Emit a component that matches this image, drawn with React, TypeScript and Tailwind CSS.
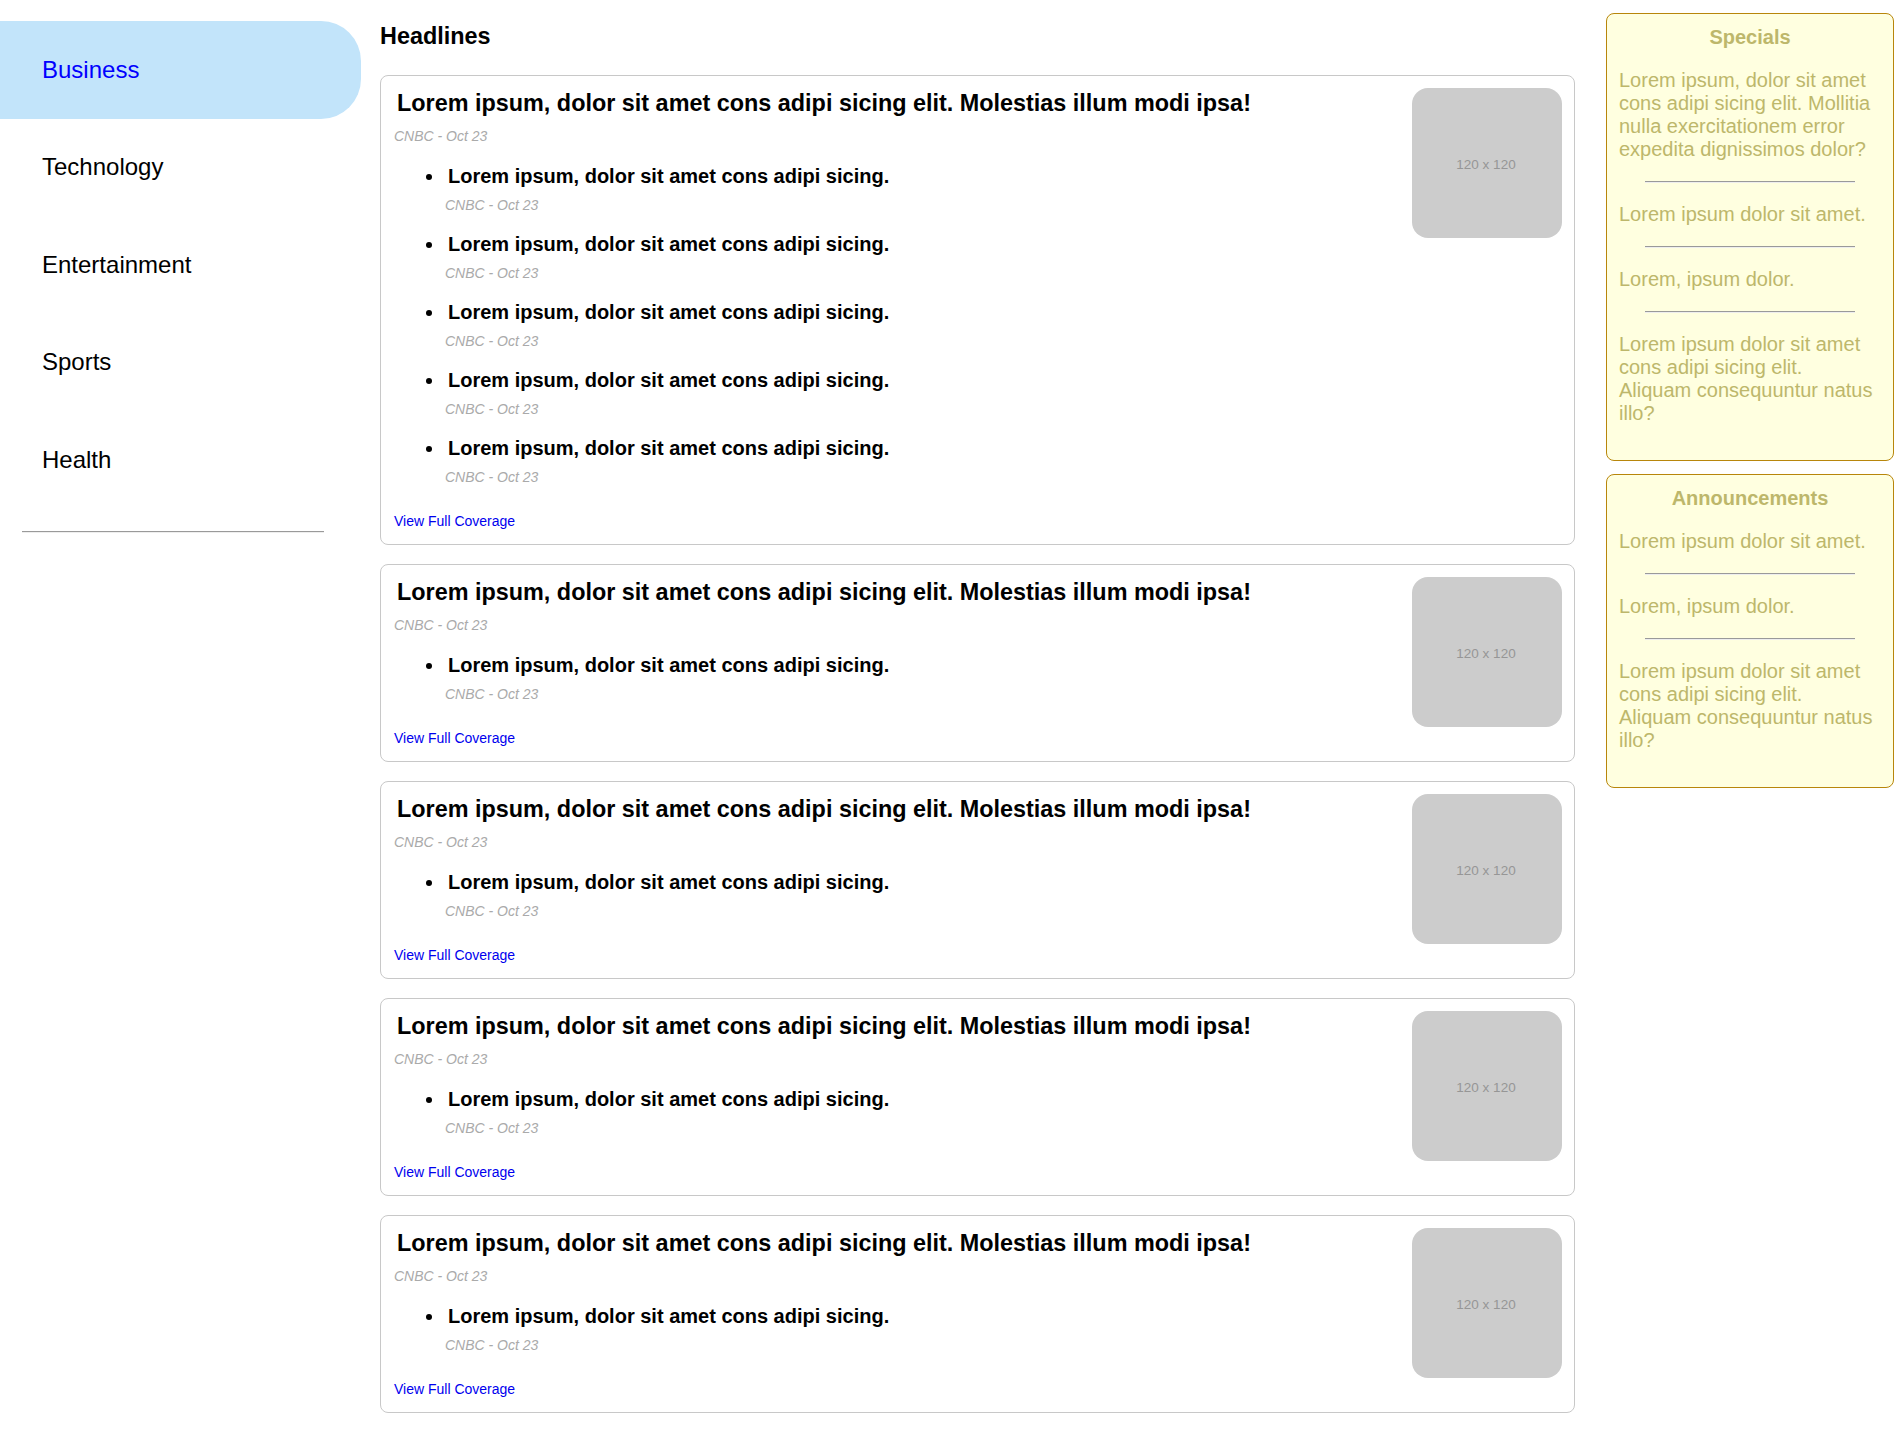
import React from "react";

const navItems = ["Business", "Technology", "Entertainment", "Sports", "Health"];

const stories = [
    { bullets: 5 },
    { bullets: 1 },
    { bullets: 1 },
    { bullets: 1 },
    { bullets: 1 },
];

const specials = [
    "Lorem ipsum, dolor sit amet cons adipi sicing elit. Mollitia nulla exercitationem error expedita dignissimos dolor?",
    "Lorem ipsum dolor sit amet.",
    "Lorem, ipsum dolor.",
    "Lorem ipsum dolor sit amet cons adipi sicing elit. Aliquam consequuntur natus illo?",
];

const announcements = [
    "Lorem ipsum dolor sit amet.",
    "Lorem, ipsum dolor.",
    "Lorem ipsum dolor sit amet cons adipi sicing elit. Aliquam consequuntur natus illo?",
];

function Sidebar() {
    return (
        <nav className="w-[361px] shrink-0 pt-[21px]">
            <ul>
                {navItems.map((item, i) => (
                    <li
                        key={item}
                        className={`h-[97.5px] flex items-center pl-[42px] text-[24px] cursor-pointer ${i === 0
                            ? "bg-[#c2e4fa] text-[#0000ff] rounded-r-[40px]"
                            : "text-black"
                            }`}
                    >
                        {item}
                    </li>
                ))}
            </ul>
            <div className="mt-[22px] ml-[22px] w-[302px] border-t border-b border-t-[#9a9a9a] border-b-[#eeeeee]" />
        </nav>
    );
}

function Meta({ className = "" }: { className?: string }) {
    return <div className={`text-[14px] leading-4 italic text-[#aaaaaa] ${className}`}>CNBC - Oct 23</div>;
}

function StoryCard({ bullets }: { bullets: number }) {
    return (
        <div className="flex border border-[#c8c8c8] rounded-lg pt-3 pr-3 pl-[13px] pb-[14.5px]">
            <div className="flex-1">
                <h3 className="mt-[2.5px] pl-[3px] text-[23.4px] leading-[27px] font-bold text-black">
                    Lorem ipsum, dolor sit amet cons adipi sicing elit. Molestias illum modi ipsa!
                </h3>
                <Meta className="mt-[10.5px]" />
                <ul className="mt-[21.5px] pl-[51px] list-disc flex flex-col gap-5">
                    {Array.from({ length: bullets }).map((_, i) => (
                        <li key={i} className="text-[20px] leading-[23px] font-bold text-black">
                            <div className="pl-[3px]">Lorem ipsum, dolor sit amet cons adipi sicing.</div>
                            <Meta className="mt-[9px] font-normal" />
                        </li>
                    ))}
                </ul>
                <a href="#" className="block mt-7 text-[14px] leading-4 text-[#0000ee]">
                    View Full Coverage
                </a>
            </div>
            <div className="w-[150px] h-[150px] shrink-0 rounded-2xl bg-[#cccccc] flex items-center justify-center pt-[5px] pr-[2px] text-[13.5px] text-[#969696]">
                120 x 120
            </div>
        </div>
    );
}

function InfoBox({ title, items }: { title: string; items: string[] }) {
    return (
        <div className="border border-[#b8860b] rounded-lg bg-[#ffffe0] pt-3 px-3 pb-[15px] text-[#bdb76b] text-[20px] leading-[23px]">
            <h4 className="font-bold text-center">{title}</h4>
            {items.map((text, i) => (
                <React.Fragment key={i}>
                    {i > 0 && (
                        <div className="mx-auto w-[80%] border-t border-b border-t-[#9a9a9a] border-b-[#eeeeee]" />
                    )}
                    <p className="my-5 mr-[5px]">{text}</p>
                </React.Fragment>
            ))}
        </div>
    );
}

export default function App() {
    return (
        <div className="flex w-[1904px] min-h-[1430px] bg-white font-['Liberation_Sans',Arial,sans-serif]">
            <Sidebar />

            {/* Headlines */}
            <main className="ml-[19px] flex-1 pt-[23px] pb-[18px]">
                <h2 className="text-[23.4px] leading-[27px] font-bold text-black">Headlines</h2>
                <div className="mt-[24.5px] flex flex-col gap-[19px]">
                    {stories.map((s, i) => (
                        <StoryCard key={i} bullets={s.bullets} />
                    ))}
                </div>
            </main>

            {/* Side boxes */}
            <aside className="ml-[31px] mr-[10px] w-[288px] shrink-0 pt-[13px] flex flex-col gap-[13px]">
                <InfoBox title="Specials" items={specials} />
                <InfoBox title="Announcements" items={announcements} />
            </aside>
        </div>
    );
}
